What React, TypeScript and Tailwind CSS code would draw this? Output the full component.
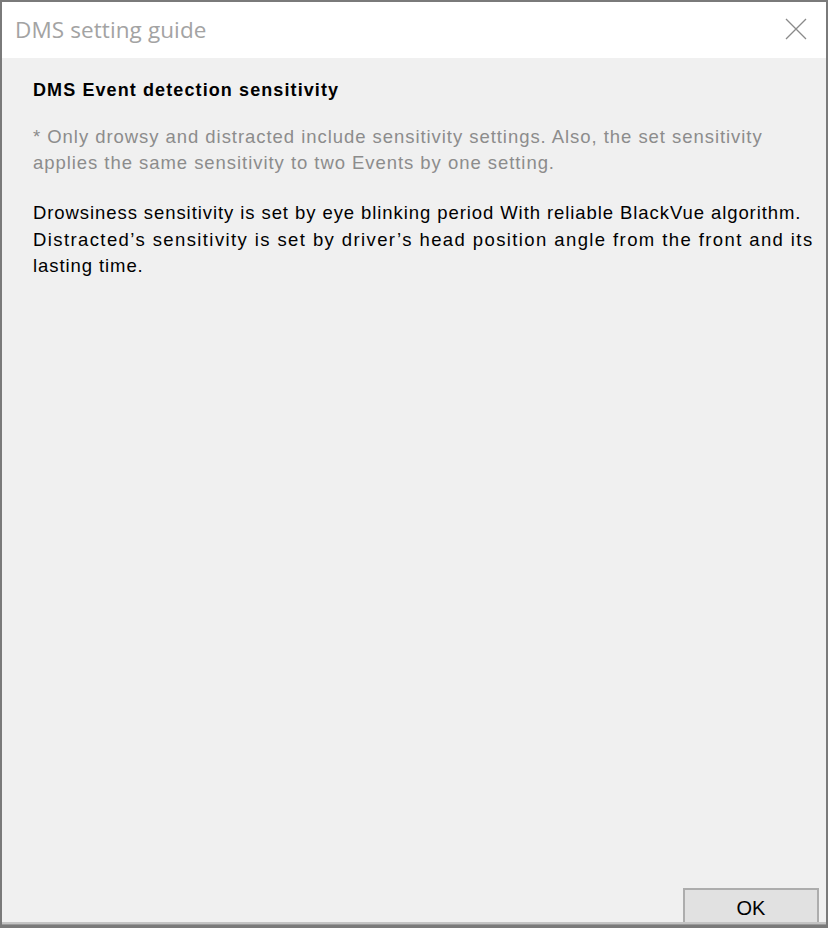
import React from 'react';

export default function App() {
  return (
    <div className="w-[828px] h-[928px] bg-[#7a7a7a] p-[2px] pb-0 flex flex-col font-['Liberation_Sans',Arial,sans-serif]">
      {/* title bar */}
      <div className="h-[56px] bg-white flex items-center justify-between pl-[13px] pr-[18px] shrink-0">
        <span className="text-[22.5px] text-[#a3a3a3] font-['Open_Sans','Noto_Sans',sans-serif] tracking-[0.1px]">
          DMS setting guide
        </span>
        <svg width="24" height="24" viewBox="0 0 24 24" className="text-[#8a8a8a] mb-[2px]">
          <path d="M2 2 L22 22 M22 2 L2 22" stroke="currentColor" strokeWidth="1.3" fill="none" />
        </svg>
      </div>

      {/* body */}
      <div className="flex-1 bg-[#f0f0f0] flex flex-col">
        <div className="flex-1 pl-[31px] pr-[4px] pt-[20px] whitespace-nowrap">
          <h1 className="text-[18px] font-bold text-black leading-[24px] mb-[22px] tracking-[1.1px]">
            DMS Event detection sensitivity
          </h1>
          <p className="text-[18.5px] text-[#8c8c8c] leading-[26px] mb-[24px] tracking-[0.95px]">
            * Only drowsy and distracted include sensitivity settings. Also, the set sensitivity
            <br />
            applies the same sensitivity to two Events by one setting.
          </p>
          <p className="text-[18.5px] text-black leading-[26.5px] tracking-[0.92px]">
            Drowsiness sensitivity is set by eye blinking period With reliable BlackVue algorithm.
            <br />
            <span className="tracking-[1.4px]">
              Distracted&#8217;s sensitivity is set by driver&#8217;s head position angle from the front and its
            </span>
            <br />
            lasting time.
          </p>
        </div>

        <div className="flex justify-end pr-[7px]">
          <button className="w-[136px] h-[34px] bg-[#e1e1e1] border-2 border-[#adadad] border-b-0 text-[20px] text-black leading-none pt-[4px]">
            OK
          </button>
        </div>
        <div className="h-[2px] bg-[#c4c4c4]" />
        <div className="h-[1px] bg-[#9a9a9a]" />
      </div>
      <div className="h-[3px] bg-[#7a7a7a]" />
    </div>
  );
}
